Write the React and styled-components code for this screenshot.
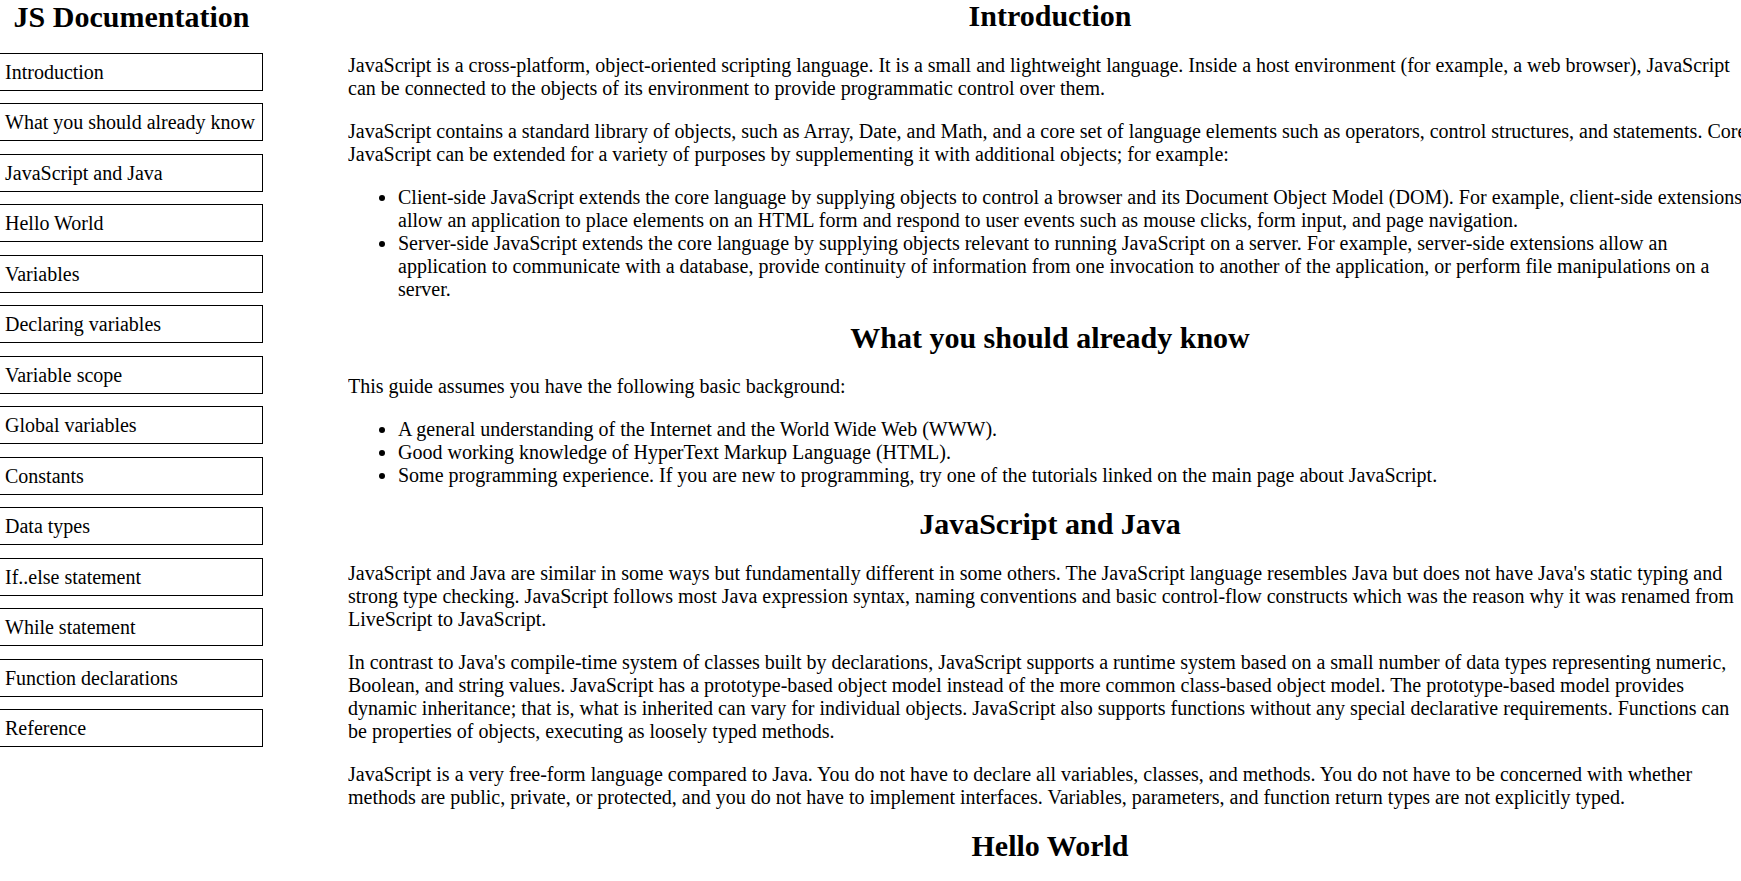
import React from 'react'
import styled, { createGlobalStyle } from 'styled-components'

const GlobalStyle = createGlobalStyle`
  html, body {
    margin: 0;
    padding: 0;
    background: #fff;
  }
  body {
    font-family: "Liberation Serif", "Times New Roman", serif;
    font-size: 20px;
    color: #000;
  }
`

const navItems = [
  'Introduction',
  'What you should already know',
  'JavaScript and Java',
  'Hello World',
  'Variables',
  'Declaring variables',
  'Variable scope',
  'Global variables',
  'Constants',
  'Data types',
  'If..else statement',
  'While statement',
  'Function declarations',
  'Reference',
]

function Docs() {
  return (
    <Page>
      <NavBar id="navbar">
        <header>JS Documentation</header>
        <NavList>
          {navItems.map((item) => (
            <NavLink key={item} href={'#' + item.replace(/\W+/g, '_')}>
              {item}
            </NavLink>
          ))}
        </NavList>
      </NavBar>

      <Main id="main-doc">
        <Section id="Introduction">
          <header>Introduction</header>
          <p>
            JavaScript is a cross-platform, object-oriented scripting language. It is a small and lightweight language. Inside a host environment (for example, a web browser), JavaScript can be connected to the objects of its environment to provide programmatic control over them.
          </p>
          <p>
            JavaScript contains a standard library of objects, such as Array, Date, and Math, and a core set of language elements such as operators, control structures, and statements. Core JavaScript can be extended for a variety of purposes by supplementing it with additional objects; for example:
          </p>
          <ul>
            <li>
              Client-side JavaScript extends the core language by supplying objects to control a browser and its Document Object Model (DOM). For example, client-side extensions allow an application to place elements on an HTML form and respond to user events such as mouse clicks, form input, and page navigation.
            </li>
            <li>
              Server-side JavaScript extends the core language by supplying objects relevant to running JavaScript on a server. For example, server-side extensions allow an application to communicate with a database, provide continuity of information from one invocation to another of the application, or perform file manipulations on a server.
            </li>
          </ul>
        </Section>

        <Section id="What_you_should_already_know">
          <header>What you should already know</header>
          <p>This guide assumes you have the following basic background:</p>
          <ul>
            <li>A general understanding of the Internet and the World Wide Web (WWW).</li>
            <li>Good working knowledge of HyperText Markup Language (HTML).</li>
            <li>Some programming experience. If you are new to programming, try one of the tutorials linked on the main page about JavaScript.</li>
          </ul>
        </Section>

        <Section id="JavaScript_and_Java">
          <header>JavaScript and Java</header>
          <p>
            JavaScript and Java are similar in some ways but fundamentally different in some others. The JavaScript language resembles Java but does not have Java's static typing and strong type checking. JavaScript follows most Java expression syntax, naming conventions and basic control-flow constructs which was the reason why it was renamed from LiveScript to JavaScript.
          </p>
          <p>
            In contrast to Java's compile-time system of classes built by declarations, JavaScript supports a runtime system based on a small number of data types representing numeric, Boolean, and string values. JavaScript has a prototype-based object model instead of the more common class-based object model. The prototype-based model provides dynamic inheritance; that is, what is inherited can vary for individual objects. JavaScript also supports functions without any special declarative requirements. Functions can be properties of objects, executing as loosely typed methods.
          </p>
          <p>
            JavaScript is a very free-form language compared to Java. You do not have to declare all variables, classes, and methods. You do not have to be concerned with whether methods are public, private, or protected, and you do not have to implement interfaces. Variables, parameters, and function return types are not explicitly typed.
          </p>
        </Section>

        <Section id="Hello_World">
          <header>Hello World</header>
          <p>
            To get started with writing JavaScript, open the Scratchpad and write your first "Hello world" JavaScript code.
          </p>
        </Section>
      </Main>
    </Page>
  )
}

export default function App() {
  return (
    <>
      <GlobalStyle />
      <Docs />
    </>
  )
}

const Page = styled.div`
  display: flex;
  align-items: flex-start;
  height: 100vh;
  overflow: hidden;
`

const NavBar = styled.nav`
  flex: 0 0 263px;
  display: flex;
  flex-direction: column;

  header {
    font-size: 30px;
    font-weight: bold;
    text-align: center;
    line-height: 34.5px;
  }
`

const NavList = styled.div`
  display: flex;
  flex-direction: column;
  gap: 12.5px;
  margin-top: 18px;
`

const NavLink = styled.a`
  display: block;
  width: 264px;
  box-sizing: border-box;
  margin-left: -1px;
  height: 38px;
  line-height: 36px;
  padding: 0 5px;
  border: 1px solid #000;
  color: #000;
  text-decoration: none;
  white-space: nowrap;
`

const Main = styled.main`
  flex: 0 0 1404px;
  margin-left: 85px;
  height: 100vh;
  overflow-y: auto;
  scrollbar-width: none;
  line-height: 23px;

  p {
    margin: 20px 0;
  }
  ul {
    margin: 20px 0;
    padding-left: 50px;
  }
`

const Section = styled.section`
  header {
    font-size: 30px;
    font-weight: bold;
    line-height: 34.5px;
    text-align: center;
    padding-right: 0;
    margin: 20px 0 19px;
  }
  &:first-child header {
    margin-top: -1px;
  }
`
